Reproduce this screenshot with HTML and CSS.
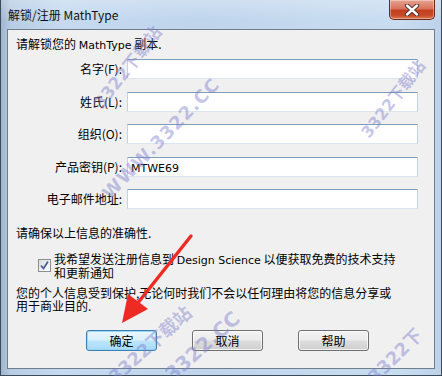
FILE: index.html
```html
<!DOCTYPE html>
<html lang="zh">
<head>
<meta charset="utf-8">
<title>解锁/注册 MathType</title>
<link rel="stylesheet" href="styles.css">
</head>
<body>
<div class="window">
  <div class="titlebar">
    <span class="title">解锁/注册 MathType</span>
    <div class="close">
      <svg width="20" height="12" viewBox="0 0 20 12">
        <path d="M5 1.5 L15 10.5 M15 1.5 L5 10.5" stroke="#3a2a28" stroke-width="4.2" stroke-linecap="round"/>
        <path d="M5 1.5 L15 10.5 M15 1.5 L5 10.5" stroke="#ffffff" stroke-width="2.4" stroke-linecap="round"/>
      </svg>
    </div>
  </div>
  <div class="client">
    <p class="intro">请解锁您的 <span class="lat">MathType</span> 副本.</p>
    <div class="form">
      <label class="lbl">名字(F):</label><div class="input"></div>
      <label class="lbl">姓氏(L):</label><div class="input"></div>
      <label class="lbl">组织(O):</label><div class="input"></div>
      <label class="lbl">产品密钥(P):</label><div class="input"><span class="lat">MTWE69</span></div>
      <label class="lbl">电子邮件地址:</label><div class="input"></div>
    </div>
    <p class="ensure">请确保以上信息的准确性.</p>
    <div class="check-row">
      <span class="checkbox">
        <svg width="11" height="11" viewBox="0 0 11 11"><path d="M2 5.5 L4.5 8.5 L9 1.5" fill="none" stroke="#4a5f95" stroke-width="1.8"/></svg>
      </span>
      <span class="check-text">我希望发送注册信息到 <span class="lat">Design Science</span> 以便获取免费的技术支持<br>和更新通知</span>
    </div>
    <p class="privacy">您的个人信息受到保护,无论何时我们不会以任何理由将您的信息分享或<br>用于商业目的.</p>
    <div class="buttons">
      <button class="btn default">确定</button>
      <button class="btn">取消</button>
      <button class="btn">帮助</button>
    </div>
  </div>

  <span class="wm wm1">3322下载站</span>
  <span class="wm wm2">WWW.3322.CC</span>
  <span class="wm wm3">3322下载站</span>
  <span class="wm wm4">3322下载站</span>
  <span class="wm wm5">3322.CC</span>
  <span class="wm wm6">3322下</span>

  <svg class="arrow" width="442" height="376" viewBox="0 0 442 376">
    <path d="M190 236 L136 304" stroke="#ee2a24" stroke-width="3.4" stroke-linecap="round"/>
    <path d="M121 323 L127 294 L147 309 Z" fill="#ee2a24"/>
  </svg>
</div>
</body>
</html>
```

FILE: styles.css
```css
* { box-sizing: border-box; }
html, body {
  margin: 0;
  padding: 0;
}
body {
  width: 442px;
  height: 376px;
  overflow: hidden;
  font-family: "Noto Sans CJK SC", "Noto Sans", sans-serif;
  font-size: 12px;
  color: #000;
}
.window {
  position: relative;
  width: 442px;
  height: 376px;
  border: 1px solid #3e4a57;
  border-top: 0;
  background: linear-gradient(90deg, #9fb6cf 0px, #b7cde4 10px, #c5daf0 60px, #bfd5ec 200px, #c9ddf1 400px, #bcd2ea 442px);
  display: flex;
  flex-direction: column;
}
.titlebar {
  height: 29px;
  flex: none;
  display: flex;
  align-items: flex-start;
  justify-content: space-between;
  padding-left: 7px;
  padding-right: 6px;
  background: linear-gradient(180deg, rgba(255,255,255,0.25), rgba(255,255,255,0) 70%);
}
.title {
  line-height: 16px;
  margin-top: 7px;
  font-size: 12px;
  color: #101010;
}
.close {
  width: 46px;
  height: 20px;
  border: 1px solid #6b2a20;
  border-top: 0;
  border-radius: 0 0 5px 5px;
  background: linear-gradient(180deg, #e8a290 0%, #d7735c 45%, #c2401f 55%, #c6492a 80%, #dd7a4e 100%);
  display: flex;
  align-items: center;
  justify-content: center;
  box-shadow: inset 0 0 0 1px rgba(255,255,255,0.35);
}
.client {
  flex: 1;
  margin: 0 6px 6px 6px;
  border: 1px solid #6f7d8c;
  background: #f0f0f0;
  padding: 6px 0 0 8px;
  display: flex;
  flex-direction: column;
}
p { margin: 0; }
.lat {
  font-family: "DejaVu Sans", "Noto Sans", sans-serif;
  font-size: 11px;
  line-height: 1;
}
.intro { line-height: 16px; height: 16px; }
.form {
  margin-top: 7px;
  display: grid;
  grid-template-columns: 114px 291px;
  column-gap: 5px;
  row-gap: 12.5px;
  margin-left: -8px;
}
.lbl {
  text-align: right;
  line-height: 20px;
  height: 20px;
}
.input {
  height: 20px;
  background: #fff;
  border: 1px solid;
  border-color: #7f9cb9 #c3d3e3 #dce6f0 #c3d3e3;
  border-radius: 1px;
  line-height: 18px;
  padding-left: 3px;
}
.ensure {
  margin-top: 16px;
  line-height: 16px;
  height: 16px;
}
.check-row {
  margin-top: 11px;
  margin-left: 22px;
  display: flex;
  align-items: center;
  gap: 3px;
  height: 26px;
}
.checkbox {
  width: 13px;
  height: 13px;
  border: 1px solid #8e8f8f;
  background: linear-gradient(135deg, #dcdcdc, #ffffff);
  display: flex;
  align-items: center;
  justify-content: center;
  margin-top: 1px;
}
.check-text { line-height: 13px; }
.privacy {
  margin-top: 9px;
  line-height: 12.5px;
  height: 25px;
}
.buttons {
  margin-top: 18px;
  padding-left: 70px;
  display: flex;
  gap: 35px;
}
.btn {
  width: 71px;
  height: 21px;
  padding: 0;
  font-family: "Noto Sans CJK SC", sans-serif;
  font-size: 12px;
  line-height: 19px;
  color: #000;
  border: 1px solid #707070;
  border-radius: 3px;
  background: linear-gradient(180deg, #f2f2f2 0%, #ebebeb 48%, #dddddd 52%, #cfcfcf 100%);
  box-shadow: inset 0 0 0 1px rgba(255,255,255,0.7);
}
.btn.default {
  border-color: #3c7fb1;
  background: linear-gradient(180deg, #eaf6fd 0%, #d9f0fc 48%, #bee6fd 52%, #a7d9f5 100%);
  box-shadow: inset 0 0 0 1px #9ad6f5;
}
.wm {
  position: absolute;
  font-family: "DejaVu Sans", "Noto Sans CJK SC", sans-serif;
  font-weight: bold;
  color: rgba(125, 125, 205, 0.45);
  transform-origin: left bottom;
  white-space: nowrap;
  pointer-events: none;
}
.wm1 { left: 105px; top: 88px; font-size: 17px; transform: rotate(-52deg); }
.wm2 { left: 112px; top: 182px; font-size: 18px; transform: rotate(-46deg); letter-spacing: 1px; }
.wm3 { left: 372px; top: 118px; font-size: 16px; transform: rotate(-52deg); }
.wm4 { left: 118px; top: 362px; font-size: 18px; transform: rotate(-42deg); }
.wm5 { left: 175px; top: 362px; font-size: 20px; transform: rotate(-42deg); }
.wm6 { left: 378px; top: 362px; font-size: 18px; transform: rotate(-45deg); }
.arrow {
  position: absolute;
  left: 0;
  top: 0;
  pointer-events: none;
}
```
